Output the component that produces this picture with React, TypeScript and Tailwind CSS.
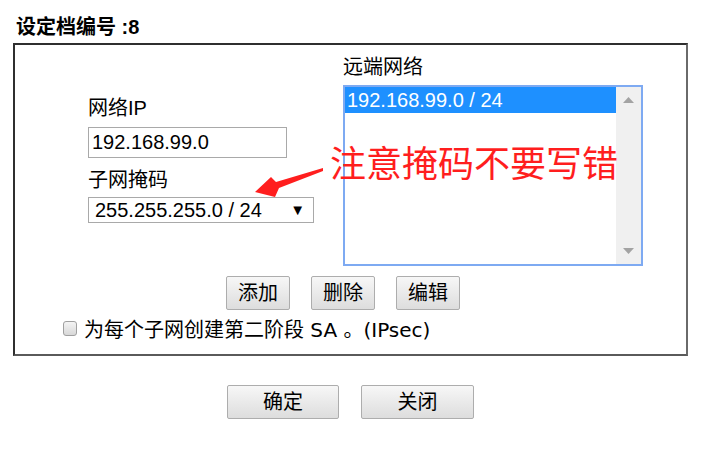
import React from "react";

const font = { fontFamily: '"Liberation Sans", "Noto Sans CJK SC", sans-serif' };
const dejavu = { fontFamily: '"DejaVu Sans", "Noto Sans CJK SC", sans-serif' };

function Btn({ children, w }: { children: React.ReactNode; w: string }) {
  return (
    <div
      className={`${w} h-[34px] flex items-center justify-center border border-[#adadad] rounded-[2px] bg-gradient-to-b from-[#f7f7f7] to-[#dddddd] text-[20px] text-black`}
    >
      {children}
    </div>
  );
}

export default function App() {
  return (
    <div className="relative w-[714px] h-[475px] bg-white pt-[15px] pl-[13px] text-black" style={font}>
      <div className="pl-[3px] text-[20px] leading-[24px] font-bold">设定档编号 :8</div>
      <div className="mt-[4px] w-[675px] h-[313px] border-2 border-t-[#2f2f2f] border-l-[#2f2f2f] border-r-[#6a6a6a] border-b-[#5a5a5a] flex flex-col">
        <div className="flex">
          <div className="ml-[73px] pt-[51px] w-[255px] flex flex-col">
            <div className="text-[20px] leading-[24px]">网络IP</div>
            <div className="mt-[7px] w-[199px] h-[31px] border border-[#a9a9a9] pl-[3px] text-[20px] leading-[29px]">
              192.168.99.0
            </div>
            <div className="mt-[10px] text-[20px] leading-[24px]">子网掩码</div>
            <div className="mt-[5px] w-[226px] h-[26px] border border-[#a9a9a9] pl-[6px] pr-[8px] flex items-center justify-between text-[20px] leading-[24px]">
              <span>255.255.255.0 / 24</span>
              <span className="text-[15px]">▼</span>
            </div>
          </div>
          <div className="pt-[10px] flex flex-col">
            <div className="text-[20px] leading-[24px]">远端网络</div>
            <div className="mt-[6px] w-[300px] h-[181px] border-2 border-[#7eaaf2] flex">
              <div className="flex-1">
                <div className="h-[26px] bg-[#1e90ff] text-white text-[20px] leading-[26px] pl-[2px]">
                  192.168.99.0 / 24
                </div>
              </div>
              <div className="w-[25px] bg-[#f0f0f0] flex flex-col items-center justify-between py-[10px]">
                <svg width="11" height="6" viewBox="0 0 11 6">
                  <polygon points="5.5,0 11,6 0,6" fill="#a3a3a3" />
                </svg>
                <svg width="11" height="6" viewBox="0 0 11 6">
                  <polygon points="0,0 11,0 5.5,6" fill="#a3a3a3" />
                </svg>
              </div>
            </div>
          </div>
        </div>
        <div className="mt-[10px] ml-[211px] flex gap-[21px]">
          <Btn w="w-[64px]">添加</Btn>
          <Btn w="w-[64px]">删除</Btn>
          <Btn w="w-[64px]">编辑</Btn>
        </div>
        <div className="mt-[8px] ml-[48px] flex items-center h-[24px]">
          <div className="w-[14px] h-[15px] rounded-[3px] border border-[#a0a0a0] bg-gradient-to-b from-[#f4f4f4] to-[#d8d8d8] mb-[4px]" />
          <span className="ml-[7px] text-[20px] leading-[24px]" style={dejavu}>
            为每个子网创建第二阶段 SA 。(IPsec)
          </span>
        </div>
      </div>
      <div className="mt-[29px] w-[675px] flex justify-center gap-[22px]">
        <Btn w="w-[112px]">确定</Btn>
        <Btn w="w-[113px]">关闭</Btn>
      </div>
      <div className="absolute left-[330px] top-[145px] text-[36px] leading-[40px] text-[#ff1e1e]">
        注意掩码不要写错
      </div>
      <svg className="absolute left-0 top-0" width="714" height="475" viewBox="0 0 714 475" style={{ pointerEvents: "none" }}>
        <polygon
          points="255,192 271,177 276,182 323,168 323,171 279,188 275,197"
          fill="#ff1e1e"
        />
      </svg>
    </div>
  );
}
